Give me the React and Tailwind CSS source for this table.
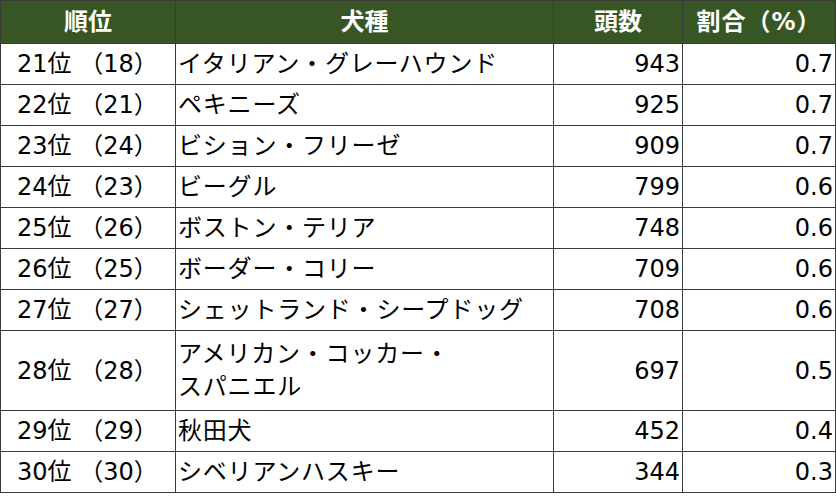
const ROWS = [
  { rank: '21位 （18）', breed: 'イタリアン・グレーハウンド', count: '943', ratio: '0.7' },
  { rank: '22位 （21）', breed: 'ペキニーズ', count: '925', ratio: '0.7' },
  { rank: '23位 （24）', breed: 'ビション・フリーゼ', count: '909', ratio: '0.7' },
  { rank: '24位 （23）', breed: 'ビーグル', count: '799', ratio: '0.6' },
  { rank: '25位 （26）', breed: 'ボストン・テリア', count: '748', ratio: '0.6' },
  { rank: '26位 （25）', breed: 'ボーダー・コリー', count: '709', ratio: '0.6' },
  { rank: '27位 （27）', breed: 'シェットランド・シープドッグ', count: '708', ratio: '0.6' },
  { rank: '28位 （28）', breed: 'アメリカン・コッカー・\nスパニエル', count: '697', ratio: '0.5', tall: true },
  { rank: '29位 （29）', breed: '秋田犬', count: '452', ratio: '0.4' },
  { rank: '30位 （30）', breed: 'シベリアンハスキー', count: '344', ratio: '0.3' },
]

function App() {
  return (
    <div className="w-[836px] h-[501px] bg-white" style={{ fontFamily: '"DejaVu Sans", "Noto Sans CJK JP", sans-serif' }}>
      <table className="border-collapse border border-[#3a3a3a] text-[24px] text-black table-fixed w-[835px]">
        <colgroup>
          <col className="w-[175px]" />
          <col className="w-[378px]" />
          <col className="w-[129px]" />
          <col className="w-[153px]" />
        </colgroup>
        <thead>
          <tr className="h-[43px] bg-[#375623] text-white font-bold text-[24px]">
            <th className="border border-[#3a3a3a] text-center p-0">順位</th>
            <th className="border border-[#3a3a3a] text-center p-0">犬種</th>
            <th className="border border-[#3a3a3a] text-center p-0">頭数</th>
            <th className="border border-[#3a3a3a] text-center p-0 tracking-[1px]">割合（%）</th>
          </tr>
        </thead>
        <tbody>
          {ROWS.map(row => (
            <tr key={row.rank} className={row.tall ? 'h-[80px]' : 'h-[41px]'}>
              <td className="border border-[#3a3a3a] pl-[16px] p-0 whitespace-nowrap">{row.rank}</td>
              <td className="border border-[#3a3a3a] pl-[2px] p-0 whitespace-pre-line leading-[33px] tracking-[0.8px]">{row.breed}</td>
              <td className="border border-[#3a3a3a] pr-[2px] p-0 text-right">{row.count}</td>
              <td className="border border-[#3a3a3a] pr-[2px] p-0 text-right">{row.ratio}</td>
            </tr>
          ))}
        </tbody>
      </table>
    </div>
  )
}

export default App
